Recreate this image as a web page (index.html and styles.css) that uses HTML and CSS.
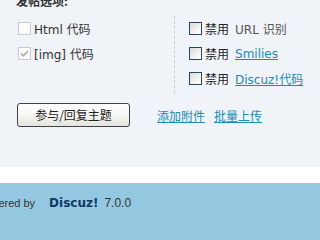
FILE: index.html
```html
<!DOCTYPE html>
<html lang="zh-CN">
<head>
<meta charset="utf-8">
<title>发帖选项</title>
<link rel="stylesheet" href="styles.css">
</head>
<body>
<div class="panel">
  <div class="opts">
    <div class="col-left">
      <div class="title">发帖选项:</div>
      <label class="row"><span class="cb cb-dis"></span>Html 代码</label>
      <label class="row"><span class="cb cb-dis"><svg width="11" height="11" viewBox="0 0 11 11"><path d="M2 5.5 L4.3 7.8 L9 3" fill="none" stroke="#a9a9a9" stroke-width="1.6"/></svg></span>[img] 代码</label>
    </div>
    <div class="col-right">
      <label class="row"><span class="cb cb-xp"></span>禁用<span class="opt">URL 识别</span></label>
      <label class="row"><span class="cb cb-xp"></span>禁用<a class="opt lnk" href="#">Smilies</a></label>
      <label class="row"><span class="cb cb-xp"></span>禁用<a class="opt lnk" href="#">Discuz!代码</a></label>
    </div>
  </div>
  <div class="actions">
    <button class="btn" type="button">参与/回复主题</button>
    <a class="lnk act" href="#">添加附件</a>
    <a class="lnk act2" href="#">批量上传</a>
  </div>
</div>
<div class="gap"></div>
<div class="footer"><span class="pw">Powered by</span><strong class="dz">Discuz!</strong><em class="ver">7.0.0</em></div>
</body>
</html>
```
FILE: styles.css
```css
html, body {
  margin: 0;
  padding: 0;
  overflow: hidden;
  background: #ffffff;
}
body {
  font-family: "DejaVu Sans", "Noto Sans CJK SC", sans-serif;
  font-size: 12px;
  color: #333333;
  white-space: nowrap;
}
.panel {
  background: #f0f3f8;
  height: 167px;
  padding-left: 16px;
  box-sizing: border-box;
  overflow: hidden;
}
.opts {
  display: flex;
  align-items: flex-start;
}
.col-left {
  width: 158px;
  flex: none;
}
.title {
  font-weight: bold;
  height: 16px;
  line-height: 16px;
  margin-top: -7px;
  margin-bottom: 7px;
  color: #333;
  font-family: "Noto Sans CJK SC", sans-serif;
}
.row {
  display: flex;
  align-items: center;
  height: 25px;
}
.col-left .row {
  padding-left: 2px;
  color: #333;
}
.cb {
  width: 13px;
  height: 13px;
  box-sizing: border-box;
  flex: none;
  margin-right: 3px;
  display: flex;
  align-items: center;
  justify-content: center;
}
.cb-dis {
  border: 1px solid #c9cbcd;
  background: #fbfbfb;
}
.cb-xp {
  border: 1px solid #2a465e;
  background: linear-gradient(135deg, #d9dbd6 0%, #f3f4f2 60%, #ffffff 100%);
}
.col-right {
  margin-top: 16px;
  border-left: 1px dashed #c6cacf;
  padding-left: 14px;
  padding-bottom: 2px;
  flex: none;
  color: #222;
}
.opt {
  margin-left: 6px;
  color: #555;
}
.lnk {
  color: #1a8cb6;
  text-decoration: underline;
}
.col-right .lnk {
  color: #1a8cb6;
}
.actions {
  display: flex;
  align-items: center;
  margin-top: 10px;
}
.btn {
  margin-left: 1px;
  width: 113px;
  height: 24px;
  padding: 0 0 2px;
  border: 1px solid #3f4346;
  border-radius: 3px;
  background: linear-gradient(#ffffff 0%, #f6f6f3 50%, #e4e4de 100%);
  font-family: "Noto Sans CJK SC", sans-serif;
  font-size: 12px;
  color: #222;
  flex: none;
}
.act {
  margin-left: 27px;
}
.act2 {
  margin-left: 9px;
}
.gap {
  height: 16px;
  background: #ffffff;
}
.footer {
  background: #94c8e0;
  height: 60px;
  padding-top: 12px;
  box-sizing: border-box;
  line-height: 16px;
  color: #333;
}
.pw {
  font-family: "Liberation Sans", sans-serif;
  font-size: 11px;
  margin-left: -23px;
}
.dz {
  font-family: "DejaVu Sans", sans-serif;
  font-weight: bold;
  font-size: 12px;
  color: #0f3a66;
  margin-left: 14px;
}
.ver {
  font-style: normal;
  font-family: "Liberation Sans", sans-serif;
  font-size: 12px;
  margin-left: 6px;
}
```
